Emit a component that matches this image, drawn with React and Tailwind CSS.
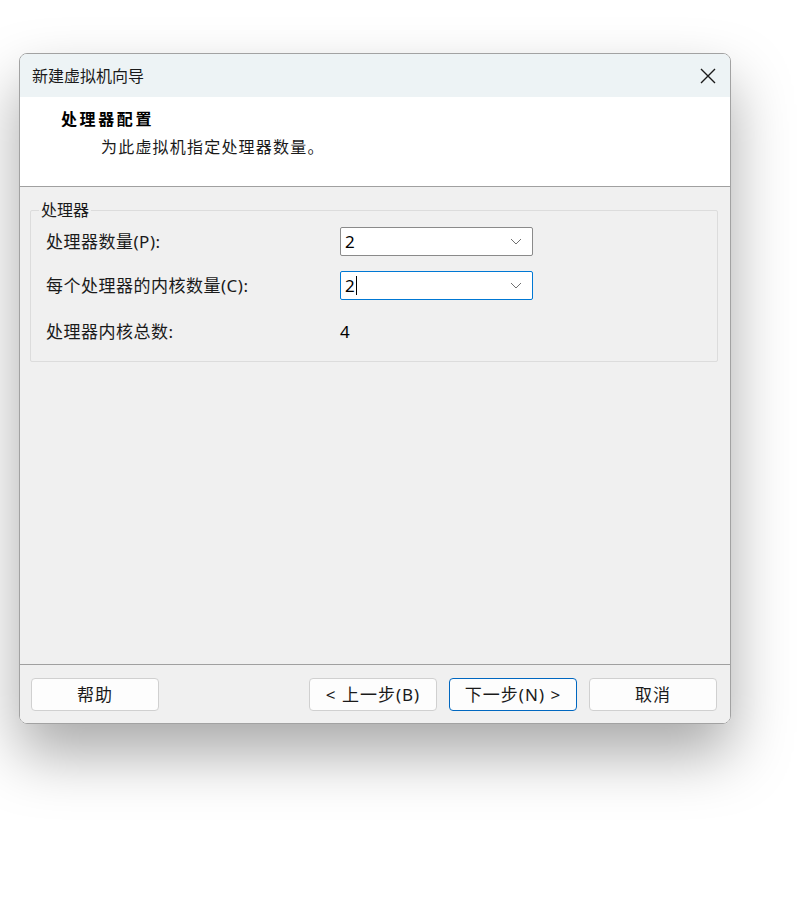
import React from "react";

const sans = { fontFamily: '"Noto Sans", "Noto Sans CJK SC", sans-serif' };

function Combo({ value, focused }) {
  return (
    <div
      className={
        "w-[193px] h-[29px] bg-white flex items-center justify-between pl-[4px] pr-[10px] rounded-[2px] border " +
        (focused ? "border-[#0078d4]" : "border-[#8a8a8a]")
      }
    >
      <span className="text-[17px] text-black leading-none flex items-center">
        {value}
        {focused && <span className="inline-block w-[1px] h-[19px] bg-black ml-[1px]" />}
      </span>
      <svg width="12" height="7" viewBox="0 0 12 7" className="text-[#707070]">
        <path d="M1 1 L6 6 L11 1" fill="none" stroke="currentColor" strokeWidth="1" />
      </svg>
    </div>
  );
}

function Btn({ children, primary }) {
  return (
    <button
      type="button"
      className={
        "w-[128px] h-[33px] bg-[#fdfdfd] rounded-[4px] border text-[17px] tracking-[1px] text-[#1a1a1a] " +
        (primary ? "border-[#0067c0]" : "border-[#d0d0d0]")
      }
    >
      {children}
    </button>
  );
}

function App() {
  return (
    <div className="w-[799px] h-[918px] bg-white pt-[53px] pl-[19px]" style={sans}>
      <div className="w-[712px] h-[671px] rounded-[8px] border border-[#a2a2a2] overflow-hidden flex flex-col shadow-[0_30px_60px_rgba(0,0,0,0.34)]">
        {/* title bar */}
        <div className="h-[43px] bg-[#edf3f5] flex items-center justify-between pl-[12px] pr-[14px]">
          <span className="text-[16px] text-[#1a1a1a]">新建虚拟机向导</span>
          <svg width="16" height="16" viewBox="0 0 16 16">
            <path d="M1 1 L15 15 M15 1 L1 15" stroke="#1a1a1a" strokeWidth="1.4" fill="none" />
          </svg>
        </div>

        {/* header */}
        <div className="h-[90px] bg-white border-b border-[#a0a0a0] pl-[41px] pt-[11px]">
          <div className="text-[16px] font-bold tracking-[2.6px] text-black leading-[22px]">处理器配置</div>
          <div className="text-[16px] tracking-[1.2px] text-[#1a1a1a] leading-[22px] mt-[6px] pl-[40px]">为此虚拟机指定处理器数量。</div>
        </div>

        {/* body */}
        <div className="flex-1 bg-[#f0f0f0] px-[10px] pt-[23px]">
          <div className="relative w-[688px] h-[152px] border border-[#dcdcdc] rounded-[2px]">
            <span className="absolute left-[8px] top-[-11px] bg-[#f0f0f0] px-[2px] text-[16px] text-[#1a1a1a] leading-[20px]">处理器</span>
            <div className="pl-[15px] pt-[16px] flex flex-col">
              <div className="flex items-center h-[29px]">
                <span className="w-[294px] text-[17px] tracking-[0.5px] text-[#1a1a1a]">处理器数量(P):</span>
                <Combo value="2" />
              </div>
              <div className="flex items-center h-[29px] mt-[15px]">
                <span className="w-[294px] text-[17px] tracking-[0.5px] text-[#1a1a1a]">每个处理器的内核数量(C):</span>
                <Combo value="2" focused />
              </div>
              <div className="flex items-center h-[29px] mt-[17px]">
                <span className="w-[294px] text-[17px] tracking-[0.5px] text-[#1a1a1a]">处理器内核总数:</span>
                <span className="text-[17px] text-black">4</span>
              </div>
            </div>
          </div>
        </div>

        {/* footer */}
        <div className="h-[59px] bg-[#f0f0f0] border-t border-[#a0a0a0] flex items-start pt-[13px] pl-[11px] pr-[13px]">
          <Btn>帮助</Btn>
          <div className="flex-1" />
          <div className="flex gap-[12px]">
            <Btn>&lt; 上一步(B)</Btn>
            <Btn primary>下一步(N) &gt;</Btn>
            <Btn>取消</Btn>
          </div>
        </div>
      </div>
    </div>
  );
}

export default App;
